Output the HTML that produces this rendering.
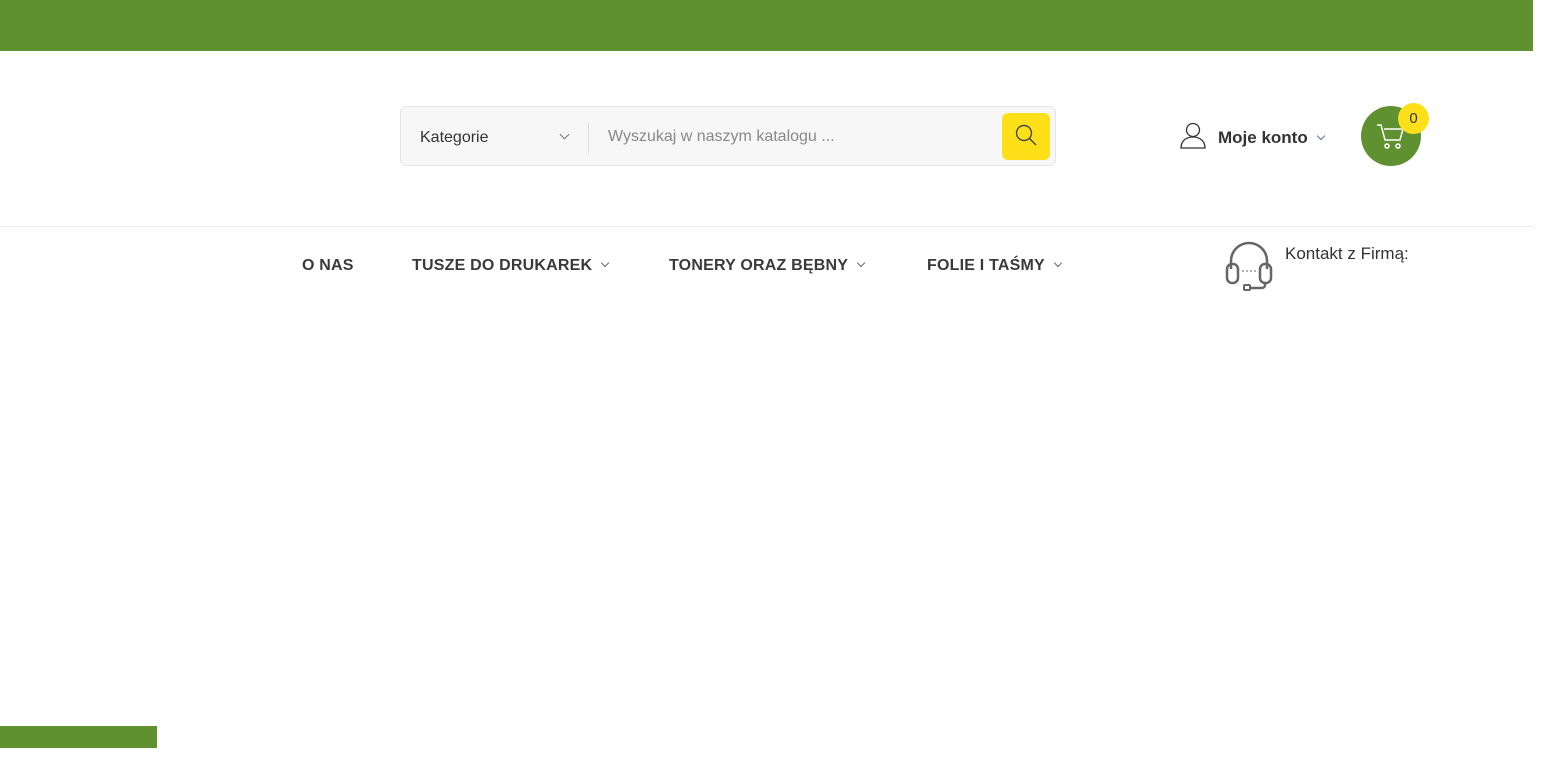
<!DOCTYPE html>
<html><head><meta charset="utf-8"><style>
body{margin:0;width:1563px;height:766px;background:#fff;font-family:"Liberation Sans",sans-serif;position:relative;overflow:hidden}
.a{position:absolute}
.top{left:0;top:0;width:1533px;height:51px;background:#5f9130}
.line{left:0;top:226px;width:1533px;height:1px;background:#ececec}
.search{left:400px;top:106px;width:654px;height:58px;border:1px solid #e4e4e4;border-radius:6px;background:#f7f7f7}
.nav{top:257px;font-size:16px;font-weight:bold;color:#3a3a3a;letter-spacing:0.2px}
.chev{display:inline-block;width:5px;height:5px;border-right:1px solid #666;border-bottom:1px solid #666;transform:rotate(45deg);margin-left:10px;position:relative;top:-4px}
</style></head><body>
<div class="a top"></div>
<div class="a search">
 <div class="a" style="left:19px;top:22px;font-size:16px;color:#333">Kategorie</div>
 <div class="a" style="left:160px;top:24px;width:6px;height:6px;border-right:1.5px solid #777;border-bottom:1.5px solid #777;transform:rotate(45deg)"></div>
 <div class="a" style="left:187px;top:16px;width:1px;height:31px;background:#ddd"></div>
 <div class="a" style="left:207px;top:21px;font-size:16px;color:#888">Wyszukaj w naszym katalogu ...</div>
 <div class="a" style="left:601px;top:6px;width:48px;height:47px;background:#fde01a;border-radius:6px">
  <svg class="a" style="left:12px;top:10px" width="24" height="24" viewBox="0 0 24 24"><circle cx="10" cy="10" r="7.5" fill="none" stroke="#444" stroke-width="1.4"/><path d="M15.5 15.5L22 22" stroke="#444" stroke-width="1.4"/></svg>
 </div>
</div>
<svg class="a" style="left:1180px;top:122px" width="26" height="27" viewBox="0 0 26 27"><circle cx="13" cy="8" r="6.5" fill="none" stroke="#333" stroke-width="1.3"/><path d="M1 26c0-7 5-11 12-11s12 4 12 11z" fill="none" stroke="#333" stroke-width="1.3"/></svg>
<div class="a" style="left:1218px;top:128px;font-size:17px;font-weight:bold;color:#333">Moje konto<span class="chev" style="border-color:#5577aa"></span></div>
<div class="a" style="left:1361px;top:106px;width:60px;height:60px;border-radius:50%;background:#5f9130"></div>
<svg class="a" style="left:1376px;top:122px" width="30" height="30" viewBox="0 0 30 30"><path d="M1 3h4l4 15h15l3-11H8" fill="none" stroke="#fff" stroke-width="1.5"/><circle cx="11" cy="24" r="2" fill="none" stroke="#fff" stroke-width="1.5"/><circle cx="22" cy="24" r="2" fill="none" stroke="#fff" stroke-width="1.5"/></svg>
<div class="a" style="left:1398px;top:103px;width:31px;height:31px;border-radius:50%;background:#fde01a;text-align:center;line-height:31px;font-size:15px;color:#333">0</div>
<div class="a line"></div>
<div class="a nav" style="left:302px">O NAS</div>
<div class="a nav" style="left:412px">TUSZE DO DRUKAREK<span class="chev"></span></div>
<div class="a nav" style="left:669px">TONERY ORAZ BĘBNY<span class="chev"></span></div>
<div class="a nav" style="left:927px">FOLIE I TAŚMY<span class="chev"></span></div>
<svg class="a" style="left:1225px;top:239px" width="48" height="52" viewBox="0 0 48 52"><path d="M6 30V22a18 18 0 0 1 36 0v8" fill="none" stroke="#666" stroke-width="2.5"/><rect x="2" y="25" width="11" height="19" rx="5" fill="none" stroke="#666" stroke-width="2.5"/><rect x="35" y="25" width="11" height="19" rx="5" fill="none" stroke="#666" stroke-width="2.5"/><path d="M40 44v2a3 3 0 0 1-3 3H24" fill="none" stroke="#666" stroke-width="2.5"/><rect x="19" y="46" width="6" height="5" rx="1" fill="none" stroke="#666" stroke-width="2"/><path d="M17 32h14" stroke="#999" stroke-width="1.5" stroke-dasharray="2 2"/></svg>
<div class="a" style="left:1285px;top:244px;font-size:17px;color:#333">Kontakt z Firmą:</div>
<div class="a" style="left:0;top:726px;width:157px;height:22px;background:#5f9130"></div>
</body></html>
